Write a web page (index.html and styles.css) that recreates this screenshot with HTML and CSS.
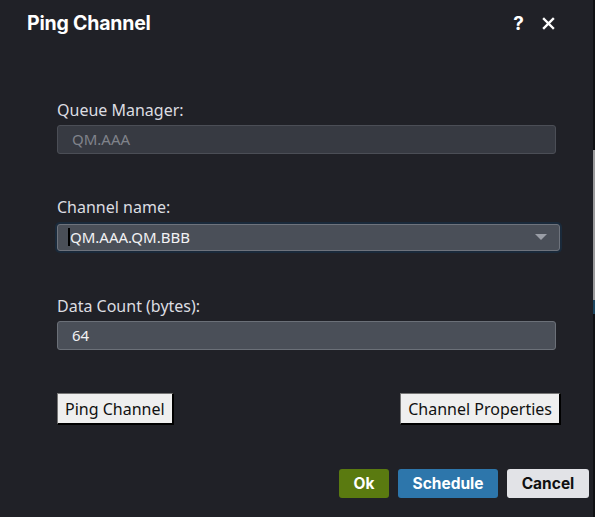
FILE: index.html
```html
<!DOCTYPE html>
<html lang="en">
<head>
    <meta charset="UTF-8">
    <meta name="viewport" content="width=device-width, initial-scale=1.0">
    <title>Ping Channel</title>
    <link rel="stylesheet" href="styles.css">
</head>
<body>
    <div class="dialog">
        <header class="dialog-header">
            <span class="dialog-title">Ping Channel</span>
            <div class="header-icons">
                <span class="icon-help">?</span>
                <svg class="icon-close" width="13" height="13" viewBox="0 0 13 13">
                    <path d="M2 2 L11 11 M11 2 L2 11" stroke="#ffffff" stroke-width="2.4" stroke-linecap="square"/>
                </svg>
            </div>
        </header>

        <div class="dialog-body">
            <div class="field">
                <label class="field-label">Queue Manager:</label>
                <div class="input input-disabled">QM.AAA</div>
            </div>

            <div class="field">
                <label class="field-label">Channel name:</label>
                <div class="select-wrap">
                    <div class="input input-select">
                        <span class="caret"></span>QM.AAA.QM.BBB
                        <svg class="select-arrow" width="12" height="6" viewBox="0 0 12 6">
                            <path d="M0 0 L12 0 L6 6 Z" fill="#9a9ea6"/>
                        </svg>
                    </div>
                </div>
            </div>

            <div class="field">
                <label class="field-label">Data Count (bytes):</label>
                <div class="input input-number">64</div>
            </div>

            <div class="action-row">
                <button class="btn-classic">Ping Channel</button>
                <button class="btn-classic">Channel Properties</button>
            </div>
        </div>

        <footer class="dialog-footer">
            <button class="btn btn-ok">Ok</button>
            <button class="btn btn-schedule">Schedule</button>
            <button class="btn btn-cancel">Cancel</button>
        </footer>
    </div>
    <div class="behind-strip">
        <div class="strip-top"></div>
        <div class="strip-mid"></div>
        <div class="strip-blue"></div>
        <div class="strip-bottom"></div>
    </div>
</body>
</html>
```

FILE: styles.css
```css
body {
    margin: 0;
    padding: 0;
    width: 595px;
    height: 517px;
    overflow: hidden;
    display: flex;
    background-color: #202127;
    font-family: "Noto Sans", "Liberation Sans", sans-serif;
    color: #e6e7ea;
}

.dialog {
    width: 593px;
    height: 517px;
    background-color: #202127; /* dark dialog */
    display: flex;
    flex-direction: column;
}

.dialog-header {
    display: flex;
    justify-content: space-between;
    align-items: center;
    height: 46px;
    padding: 0 38px 0 27px;
}

.dialog-title {
    font-family: Inter, "Noto Sans", sans-serif;
    font-weight: 700;
    font-size: 19.5px;
    color: #ffffff;
    letter-spacing: -0.2px;
}

.header-icons {
    display: flex;
    align-items: center;
    gap: 18px;
}

.icon-help {
    font-family: Inter, sans-serif;
    font-weight: 700;
    font-size: 19px;
    color: #ffffff;
    line-height: 1;
}

.icon-close {
    display: block;
}

.dialog-body {
    padding: 54px 0 0 57px;
}

.field {
    margin-bottom: 43px;
}

.field-label {
    display: block;
    font-size: 16px;
    color: #dcdde1;
    margin-bottom: 4px;
    line-height: 21px;
}

.input {
    box-sizing: border-box;
    width: 499px;
    height: 29px;
    border-radius: 3px;
    font-size: 15px;
    line-height: 27px;
    padding-left: 14px;
    position: relative;
}

.input-disabled {
    background: #373a42;
    border: 1px solid #4b4e56;
    color: #80838b;
}

.select-wrap {
    width: 507px;
    margin-left: -2px;
    padding: 2px;
    box-sizing: border-box;
    border-radius: 5px;
    background: #1a2a3b; /* focus ring */
}

.input-select {
    width: 503px;
    height: 27px;
    line-height: 25px;
    background: #4a4f58;
    border: 1px solid #6e737c;
    color: #f2f2f4;
    padding-left: 10px;
}

.caret {
    display: inline-block;
    width: 2px;
    height: 18px;
    background: #000000;
    vertical-align: middle;
    margin-top: -3px;
}

.select-arrow {
    position: absolute;
    right: 12px;
    top: 9px;
}

.input-number {
    background: #4a4f58;
    border: 1px solid #6b7078;
    color: #f2f2f4;
}

.action-row {
    display: flex;
    justify-content: space-between;
    width: 504px;
    margin-top: 39px;
}

.btn-classic {
    font-family: "Noto Sans", sans-serif;
    font-size: 16px;
    color: #111111;
    background: #efefef;
    border: 1px solid #767676;
    border-right: 2px solid #000000;
    border-bottom: 2px solid #000000;
    height: 32px;
    padding: 0 7px;
}

.dialog-footer {
    display: flex;
    justify-content: flex-end;
    gap: 9px;
    padding: 0 4px 0 0;
    margin-top: auto;
    margin-bottom: 19px;
}

.btn {
    font-family: Inter, "Noto Sans", sans-serif;
    font-weight: 700;
    font-size: 15.5px;
    height: 29px;
    border: none;
    border-radius: 3px;
    padding: 0 10px;
}

.btn-ok {
    background: #5a7a10;
    color: #ffffff;
    width: 50px;
}

.btn-schedule {
    background: #2d76ab;
    color: #ffffff;
    width: 100px;
}

.btn-cancel {
    background: #e2e3e7;
    color: #111111;
    width: 82px;
}

.behind-strip {
    width: 2px;
    height: 517px;
    display: flex;
    flex-direction: column;
}

.strip-top {
    height: 150px;
    background: #101114;
}

.strip-mid {
    height: 150px;
    background: #9a9a9c;
}

.strip-blue {
    height: 14px;
    background: #1d4660;
}

.strip-bottom {
    flex: 1;
    background: #101114;
}
```
